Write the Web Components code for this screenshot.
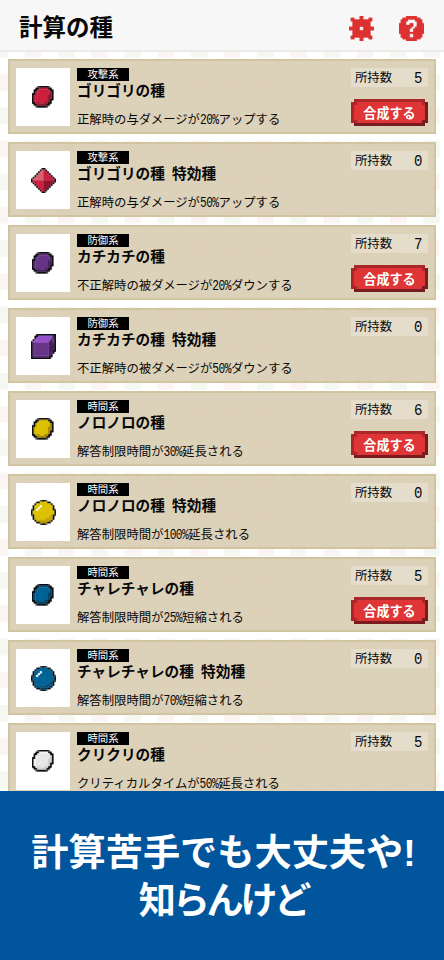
<!DOCTYPE html>
<html lang="ja">
<head>
<meta charset="utf-8">
<title>計算の種</title>
<style>
html,body{margin:0;height:960px;overflow:hidden;background:#fff}
body{font-family:"Noto Sans CJK JP","Liberation Sans",sans-serif;color:#080808}
</style>
</head>
<body>
<seed-app></seed-app>
<script>
const oval = [
  '...kKKKKKk..', '..KKmmmmmKK.', '.KKmrrrrrmKK', '.KmrrrrrrrdK', 'KKmrrrrrrrdK', 'KmrrrrrrrddK',
  'KmrrrrrrrddK', 'KmrrrrrrrdKK', 'KmrrrrrrrdK.', 'KKmdrrrddKK.', '.KKdddddKK..', '..kKKKKKk...'
];
const diamond = [
  '......KK......', '.....KlrK.....', '....KllrrK....', '...KlllrrrK...', '..KllllrrrrK..', '.KlllllrrrrrK.',
  'KllllllrrrrrrK', 'KrrrrrrddddddK', '.KrrrrrdddddK.', '..KrrrrddddK..', '...KrrrdddK...', '....KrrddK....',
  '.....KrdK.....', '......KK......'
];
const cube = [
  '...KKKKKKKKKKK', '..KKlllllllldK', '..KllllllllldK', '.KllllllllldmK', 'KlllllllllddmK', 'KmmrrrrrrrdddK',
  'KmrrrrrrrrdddK', 'KmrrrrrrrrdddK', 'KmrrrrrrrrdddK', 'KmrrrrrrrrddKK', 'KmrrrrrrrrddK.', 'KmrrrrrrrrdK..',
  'KmmmmmmmmmKK..', 'KKKKKKKKKKK...'
];
const ball = [
  '.....kKKk.....', '...KKrrrrKK...', '..KrrrrrrrrK..', '.KrrrwrrrrrrK.', '.KrrwrrrrrrrK.', 'kKrwrrrrrrrrKk',
  'KrrrrrrrrrrrrK', 'KrrrrrrrrrrrrK', 'kKrrrrrrrrrmKk', '.KrrrrrrrrmmK.', '.KmrrrrrmmmmK.', '..KmmmmmmmdK..',
  '...KKddddKK...', '.....kKKk.....'
];
const gear = [
  '......rr......', '.rr...rr...rr.', '.rrrrrrrrrrrr.', '..rrrrrrrrrr..', '..rrrrrrrrrr..', '..rrrrrrrrrr..',
  'rrrrrr..rrrrrr', 'rrrrrr..rrrrrr', '..rrrrrrrrrr..', '..rrrrrrrrrr..', '..rrrrrrrrrr..', '.rrrrrrrrrrrr.',
  '.rr...rr...rr.', '......rr......'
];
const help = [
  '....rrrrrr....', '..rrrrrrrrrr..', '.rrrr....rrrr.', '.rrr......rrr.', 'rrrr..rr..rrrr', 'rrrrrrrr..rrrr',
  'rrrrrrr..rrrrr', 'rrrrrr..rrrrrr', 'rrrrrr..rrrrrr', 'rrrrrrrrrrrrrr', '.rrrrr..rrrrr.', '.rrrrr..rrrrr.',
  '..rrrrrrrrrr..', '....rrrrrr....'
];
const shapes = {oval, diamond, cube, ball, gear, help};
const inks = {
  red:{r:'#ce2443',m:'#b61e39',d:'#921a2e',l:'#d76574'},
  purple:{r:'#6b378b',m:'#5d2e7c',d:'#48225f',l:'#9955ca'},
  yellow:{r:'#dfc400',m:'#c8aa00',d:'#aa8c00',w:'#fffce0'},
  blue:{r:'#006699',m:'#005684',d:'#004469',w:'#fff'},
  white:{r:'#e9e9e9',m:'#f3f3f3',d:'#d2d2d2'},
  ui:{r:'#df3536'}
};

class PixelIcon extends HTMLElement {
  connectedCallback(){
    const rows = shapes[this.getAttribute('shape')];
    const ink = {K:'#121216', k:'#55555a', ...inks[this.getAttribute('ink')]};
    const paths = {};
    rows.forEach((row,y)=>[...row].forEach((c,x)=>{
      if (ink[c]) paths[c] = (paths[c] || '') + `M${x} ${y}h1v1h-1z`;
    }));
    const cells = Object.entries(paths).map(([c,d])=>`<path fill="${ink[c]}" stroke="${ink[c]}" stroke-width=".16" d="${d}"/>`).join('');
    const n = rows.length;
    const size = n === 14 ? 25 : 21.4;
    this.attachShadow({mode:'open'}).innerHTML =
      `<style>:host{display:block;line-height:0}svg{display:block}</style>
       <svg width="${size}" height="${size}" viewBox="0 0 ${n} ${n}">${cells}</svg>`;
  }
}
customElements.define('pixel-icon', PixelIcon);

class SeedBackdrop extends HTMLElement {
  connectedCallback(){
    this.attachShadow({mode:'open'}).innerHTML = `
      <style>:host{display:block;position:absolute;inset:0;z-index:-1}svg{display:block}</style>
      <svg width="444" height="960">
        <pattern id="p" x="-8.4" y="41" width="66.4" height="66.4" patternUnits="userSpaceOnUse">
          <rect width="16.6" height="16.6" fill="#f5f8f1"/>
          <rect x="33.2" width="16.6" height="16.6" fill="#faf5f2"/>
          <rect y="33.2" width="16.6" height="16.6" fill="#faf5f2"/>
          <rect x="33.2" y="33.2" width="16.6" height="16.6" fill="#f5f8f1"/>
        </pattern>
        <rect width="444" height="960" fill="url(#p)"/>
      </svg>`;
  }
}
customElements.define('seed-backdrop', SeedBackdrop);

class SeedHeader extends HTMLElement {
  connectedCallback(){
    this.attachShadow({mode:'open'}).innerHTML = `
      <style>
        :host{display:flex;box-sizing:border-box;height:51.5px;padding:3px 20px 0 19px;align-items:center;background:rgba(247,247,247,.96);border-bottom:2px solid #ebebeb}
        h1{margin:0;flex:1;font-size:23.5px;line-height:34px;font-weight:700}
        .tools{display:flex;gap:25px;padding-top:4px}
      </style>
      <h1><slot></slot></h1>
      <div class="tools"><pixel-icon shape="gear" ink="ui"></pixel-icon><pixel-icon shape="help" ink="ui"></pixel-icon></div>`;
  }
}
customElements.define('seed-header', SeedHeader);

class MixButton extends HTMLElement {
  connectedCallback(){
    this.attachShadow({mode:'open'}).innerHTML = `
      <style>
        :host{display:grid;width:77px;height:27px}
        svg,span{grid-area:1/1}
        svg{display:block}
        span{font-size:13.1px;line-height:27px;font-weight:700;color:#fff;text-align:center;padding-left:1px}
      </style>
      <svg width="77" height="27" shape-rendering="crispEdges">
        <path fill="#a92729" d="M3 0H74V3H77V24H74V27H3V24H0V3H3Z"/>
        <path fill="#791c20" d="M74 3H77V24H74V27H3V24H71V21H74Z"/>
        <path fill="#df3536" d="M6 3H71V6H74V21H71V24H6V21H3V6H6Z"/>
      </svg>
      <span><slot></slot></span>`;
  }
}
customElements.define('mix-button', MixButton);

class SeedCard extends HTMLElement {
  connectedCallback(){
    const a = n => this.getAttribute(n);
    const desc = a('desc').replace(/[0-9]+%/, m => `<i>${m}</i>`);
    this.attachShadow({mode:'open'}).innerHTML = `
      <style>
        :host{display:grid;box-sizing:border-box;grid-template-columns:54px 1fr 77.5px;column-gap:7px;height:75px;padding:7px 6px;border:2px solid #d1c4a0;background:rgba(217,205,180,.93);background-clip:padding-box}
        .pic{display:grid;place-items:center;height:58px;background:#fff}
        .text{display:flex;flex-direction:column;align-items:flex-start;white-space:nowrap;min-width:0}
        .tag,.name{font-family:"Liberation Sans","Noto Sans CJK JP",sans-serif}
        .tag{box-sizing:border-box;width:52px;height:13px;padding-top:1px;line-height:12.6px;background:#000;color:#fff;font-size:10.4px;text-align:center}
        .name{font-size:14.65px;line-height:20px;height:20px;font-weight:700;word-spacing:3.2px}
        .desc{font-size:12.36px;line-height:18px;margin-top:8.5px}
        i{display:inline-block;font:11.2px/1 "Liberation Mono",monospace;letter-spacing:-.54px;transform:scaleY(1.28);transform-origin:0 80%}
        .side{display:flex;flex-direction:column;gap:12px}
        .count{display:flex;box-sizing:border-box;justify-content:space-between;align-items:center;height:19px;padding:0 5.5px 0 4.5px;background:rgba(255,255,255,.26);font-size:12.36px;line-height:19px}
        b{font:14px/19px "Liberation Mono",monospace;padding-top:1px;transform:scaleY(1.15)}
      </style>
      <div class="pic"><pixel-icon shape="${a('shape')}" ink="${a('ink')}"></pixel-icon></div>
      <div class="text"><div class="tag">${a('tag')}</div><div class="name">${a('name')}</div><div class="desc">${desc}</div></div>
      <div class="side"><div class="count"><span>所持数</span><b>${a('count')}</b></div><slot></slot></div>`;
  }
}
customElements.define('seed-card', SeedCard);

class SeedBanner extends HTMLElement {
  connectedCallback(){
    this.attachShadow({mode:'open'}).innerHTML = `
      <style>
        :host{display:flex;flex-direction:column;justify-content:center;align-items:center;box-sizing:border-box;background:#00559d;color:#fff;font:700 37.2px/48.3px "Liberation Sans","Noto Sans CJK JP",sans-serif;white-space:nowrap;padding:4px 0 0 3px}
        ::slotted(:last-child){letter-spacing:-3.3px}
      </style>
      <slot></slot>`;
  }
}
customElements.define('seed-banner', SeedBanner);

const seeds = [
  ['oval','red','攻撃系','ゴリゴリの種','正解時の与ダメージが20%アップする',5,1],
  ['diamond','red','攻撃系','ゴリゴリの種 特効種','正解時の与ダメージが50%アップする',0],
  ['oval','purple','防御系','カチカチの種','不正解時の被ダメージが20%ダウンする',7,1],
  ['cube','purple','防御系','カチカチの種 特効種','不正解時の被ダメージが50%ダウンする',0],
  ['oval','yellow','時間系','ノロノロの種','解答制限時間が30%延長される',6,1],
  ['ball','yellow','時間系','ノロノロの種 特効種','解答制限時間が100%延長される',0],
  ['oval','blue','時間系','チャレチャレの種','解答制限時間が25%短縮される',5,1],
  ['ball','blue','時間系','チャレチャレの種 特効種','解答制限時間が70%短縮される',0],
  ['oval','white','時間系','クリクリの種','クリティカルタイムが50%延長される',5]
];
class SeedApp extends HTMLElement {
  connectedCallback(){
    this.attachShadow({mode:'open'}).innerHTML = `
      <style>
        :host{display:grid;position:relative;isolation:isolate;width:444px;height:960px;grid-template-rows:51.5px 739.2px 1fr;overflow:hidden}
        main{display:flex;flex-direction:column;gap:8px;padding:7.5px 8px 0;overflow:hidden}
        seed-card{flex:none}
      </style>
      <seed-backdrop></seed-backdrop>
      <seed-header>計算の種</seed-header>
      <main>${seeds.map(([s,i,t,n,d,c,m])=>`<seed-card shape="${s}" ink="${i}" tag="${t}" name="${n}" desc="${d}" count="${c}">${m?'<mix-button>合成する</mix-button>':''}</seed-card>`).join('')}</main>
      <seed-banner><div>計算苦手でも大丈夫や!</div><div>知らんけど</div></seed-banner>`;
  }
}
customElements.define('seed-app', SeedApp);
</script>
</body>
</html>
